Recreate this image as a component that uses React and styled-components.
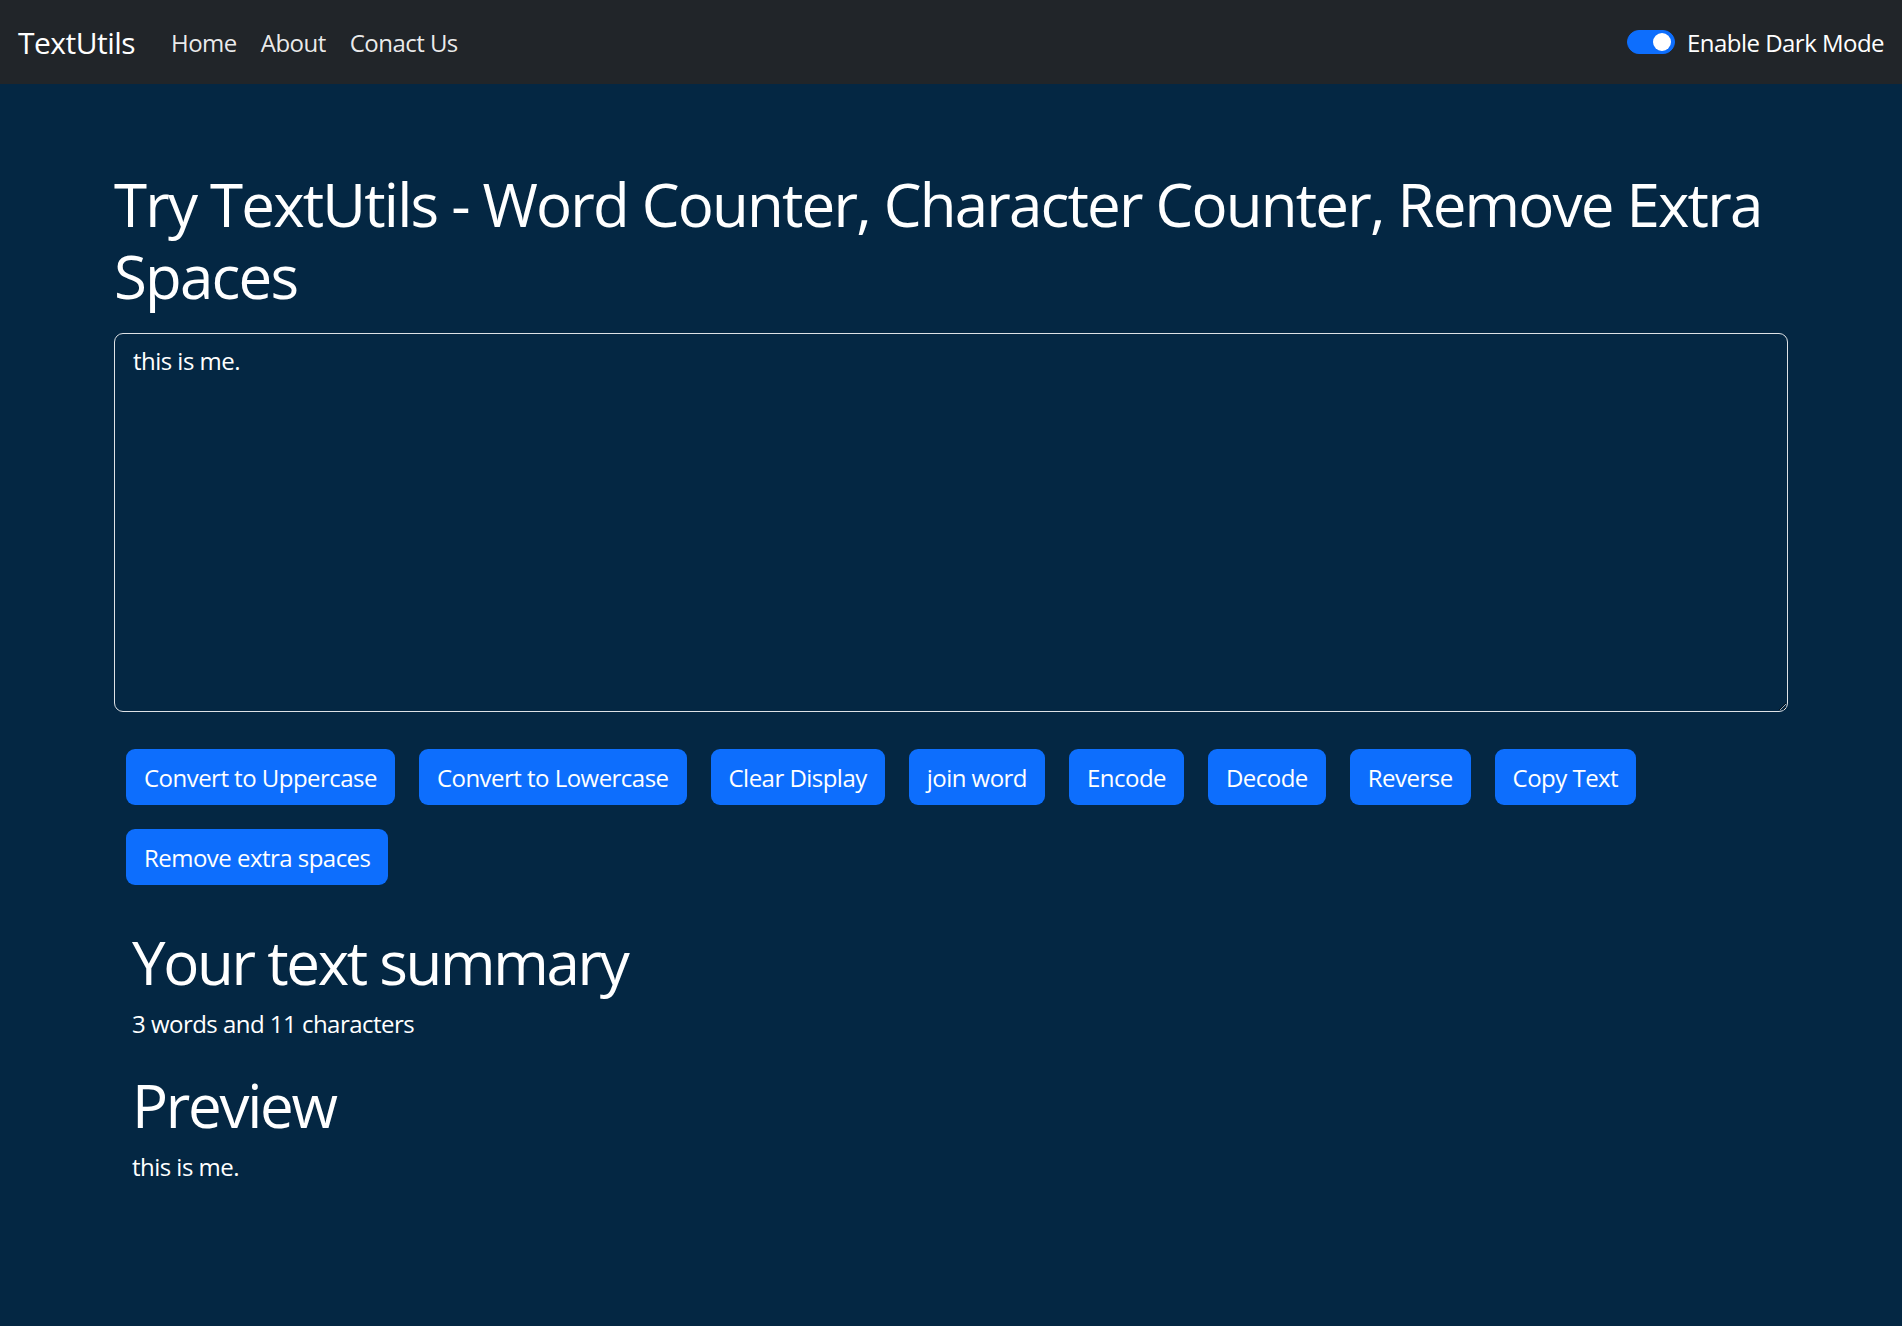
import React, { useState } from 'react'
import styled, { createGlobalStyle } from 'styled-components'

const GlobalStyle = createGlobalStyle`
	* {
		box-sizing: border-box;
	}

	html,
	body {
		margin: 0;
		padding: 0;
		background: #042743;
		font-family: 'Open Sans', 'Noto Sans', sans-serif;
		letter-spacing: -0.033em;
		color: #fff;
	}
`

const Page = styled.div`
	min-height: 100vh;
	background: #042743;
`

const Navbar = styled.nav`
	display: flex;
	align-items: center;
	justify-content: space-between;
	height: 84px;
	padding: 0 18px;
	background: #212529;
`

const NavLeft = styled.div`
	display: flex;
	align-items: center;
`

const Brand = styled.a`
	margin-right: 24px;
	font-size: 30px;
	color: #fff;
	text-decoration: none;
`

const NavLink = styled.a`
	padding: 12px;
	font-size: 24px;
	color: rgba(255, 255, 255, 0.92);
	text-decoration: none;
`

const Switch = styled.label`
	display: flex;
	align-items: center;
	gap: 12px;
	font-size: 24px;
	color: #fff;
	cursor: pointer;
`

const Track = styled.span`
	display: flex;
	align-items: center;
	justify-content: ${({ $on }) => ($on ? 'flex-end' : 'flex-start')};
	width: 48px;
	height: 24px;
	padding: 0 3px;
	border-radius: 12px;
	background: ${({ $on }) => ($on ? '#0d6efd' : 'transparent')};
	border: 1.5px solid ${({ $on }) => ($on ? '#0d6efd' : '#ced4da')};

	&::after {
		content: '';
		width: 18px;
		height: 18px;
		border-radius: 50%;
		background: ${({ $on }) => ($on ? '#fff' : '#ced4da')};
	}
`

const Container = styled.main`
	width: 1710px;
	margin: 0 auto;
	padding: 84px 18px 0;
`

const Title = styled.h1`
	margin: 0 0 21px;
	font-size: 60px;
	font-weight: 400;
	line-height: 72px;
	letter-spacing: -0.03em;
`

const TextArea = styled.textarea`
	display: block;
	width: 100%;
	height: 379px;
	margin-bottom: 25px;
	padding: 9px 18px;
	font-family: inherit;
	font-size: 24px;
	line-height: 36px;
	letter-spacing: inherit;
	color: #fff;
	background: #042743;
	border: 1.5px solid #dee2e6;
	border-radius: 9px;
	resize: vertical;
	outline: none;
`

const ButtonBar = styled.div`
	display: flex;
	flex-wrap: wrap;
`

const Button = styled.button`
	height: 56px;
	margin: 12px;
	padding: 0 18px;
	font-family: inherit;
	font-size: 24px;
	letter-spacing: inherit;
	color: #fff;
	background: #0d6efd;
	border: none;
	border-radius: 9px;
	cursor: pointer;
`

const Section = styled.section`
	padding: 0 18px;
	margin-top: ${({ $top }) => $top}px;
`

const Heading = styled.h2`
	margin: 0 0 8px;
	font-size: 60px;
	font-weight: 400;
	line-height: 72px;
	letter-spacing: -0.038em;
`

const Text = styled.p`
	margin: 0;
	font-size: 24px;
	line-height: 36px;
`

const actions = [
	'Convert to Uppercase',
	'Convert to Lowercase',
	'Clear Display',
	'join word',
	'Encode',
	'Decode',
	'Reverse',
	'Copy Text',
	'Remove extra spaces',
]

export default function App() {
	const [text, setText] = useState('this is me.')
	const [dark, setDark] = useState(true)

	const words = text.split(/\s+/).filter((w) => w.length > 0).length

	return (
		<Page>
			<GlobalStyle />
			<Navbar>
				<NavLeft>
					<Brand href="#">TextUtils</Brand>
					<NavLink href="#">Home</NavLink>
					<NavLink href="#">About</NavLink>
					<NavLink href="#">Conact Us</NavLink>
				</NavLeft>
				<Switch onClick={() => setDark(!dark)}>
					<Track $on={dark} />
					Enable Dark Mode
				</Switch>
			</Navbar>

			<Container>
				<Title>
					Try TextUtils - Word Counter, Character Counter, Remove Extra Spaces
				</Title>
				<TextArea value={text} onChange={(e) => setText(e.target.value)} />
				<ButtonBar>
					{actions.map((label) => (
						<Button key={label}>{label}</Button>
					))}
				</ButtonBar>

				<Section $top={29}>
					<Heading>Your text summary</Heading>
					<Text>
						{words} words and {text.length} characters
					</Text>
				</Section>
				<Section $top={27}>
					<Heading>Preview</Heading>
					<Text>{text}</Text>
				</Section>
			</Container>
		</Page>
	)
}
